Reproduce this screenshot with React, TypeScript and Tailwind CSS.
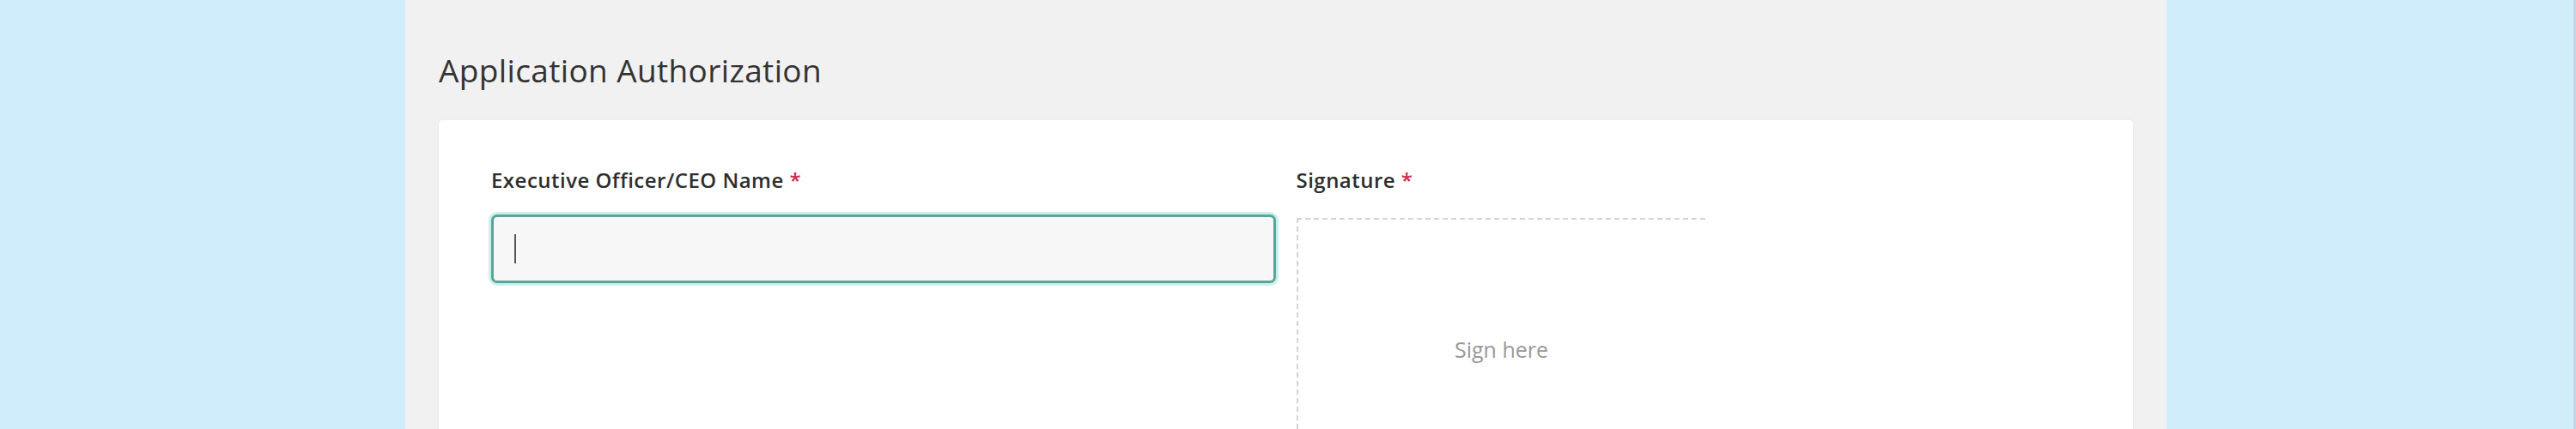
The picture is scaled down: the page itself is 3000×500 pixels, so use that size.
import React from 'react';

const font = { fontFamily: '"Open Sans", "Liberation Sans", sans-serif' };

const Label: React.FC<{ text: string }> = ({ text }) => (
  <label className="block text-[24px] font-semibold leading-[31px] text-[#2e2e2e] tracking-[0.02em]">
    {text} <span className="text-[#d0284a]">*</span>
  </label>
);

const App: React.FC = () => {
  return (
    <div className="w-[3000px] h-[500px] overflow-hidden bg-[#d0edfb] flex" style={font}>
      <div className="ml-[472px] w-[2051px] h-full bg-[#f1f1f1] px-[39px] pt-[57px]">
        <h2 className="text-[37px] leading-[50px] font-normal text-[#333333] tracking-[0.01em]">
          Application Authorization
        </h2>

        {/* Authorization card */}
        <div className="mt-[33px] h-[500px] bg-white rounded-sm shadow-[0_0_3px_rgba(0,0,0,0.06)] px-[61px] pt-[54px]">
          <div className="grid grid-cols-2 gap-x-[24px]">
            <div>
              <Label text="Executive Officer/CEO Name" />
              <div className="mt-[25px] h-[80px] rounded-[7px] border-[3px] border-[#5aa597] bg-[#f7f7f7] shadow-[0_0_0_3px_#c9f1ec] flex items-center pl-[24px]">
                <span className="w-[2px] h-[34px] bg-[#555555]" />
              </div>
            </div>

            <div>
              <Label text="Signature" />
              <div className="mt-[29px] w-[476px] h-[306px] border-t-2 border-l-2 border-dashed border-[#d4d4d4] flex items-center justify-center">
                <span className="text-[25px] text-[#9a9a9a]">Sign here</span>
              </div>
            </div>
          </div>
        </div>
      </div>
      <div className="ml-auto w-[3px] h-full bg-[#c4d6df]" />
    </div>
  );
};

export default App;
